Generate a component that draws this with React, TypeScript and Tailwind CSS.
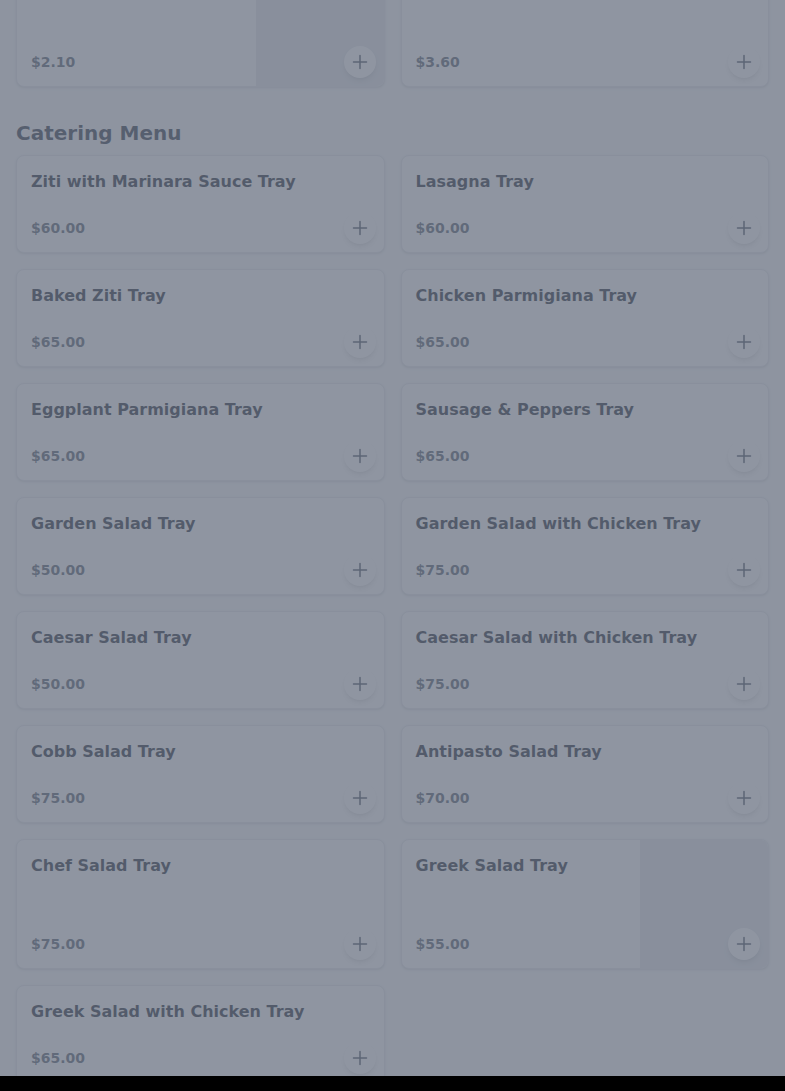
import { useState } from "react";

type Item = { name: string; price: string; image?: boolean };

const topRow: Item[] = [
  { name: "Garlic Knots", price: "$2.10", image: true },
  { name: "Side of Meatballs", price: "$3.60" },
];

const catering: Item[] = [
  { name: "Ziti with Marinara Sauce Tray", price: "$60.00" },
  { name: "Lasagna Tray", price: "$60.00" },
  { name: "Baked Ziti Tray", price: "$65.00" },
  { name: "Chicken Parmigiana Tray", price: "$65.00" },
  { name: "Eggplant Parmigiana Tray", price: "$65.00" },
  { name: "Sausage & Peppers Tray", price: "$65.00" },
  { name: "Garden Salad Tray", price: "$50.00" },
  { name: "Garden Salad with Chicken Tray", price: "$75.00" },
  { name: "Caesar Salad Tray", price: "$50.00" },
  { name: "Caesar Salad with Chicken Tray", price: "$75.00" },
  { name: "Cobb Salad Tray", price: "$75.00" },
  { name: "Antipasto Salad Tray", price: "$70.00" },
  { name: "Chef Salad Tray", price: "$75.00" },
  { name: "Greek Salad Tray", price: "$55.00", image: true },
  { name: "Greek Salad with Chicken Tray", price: "$65.00" },
];

const PlusIcon = () => (
  <svg width="16" height="16" viewBox="0 0 16 16" fill="none" stroke="currentColor" strokeWidth="1.5" strokeLinecap="round">
    <path d="M8 1.5v13M1.5 8h13" />
  </svg>
);

const MenuCard = ({ item, onAdd }: { item: Item; onAdd: () => void }) => (
  <div className="relative flex overflow-hidden rounded-lg border border-gray-200 bg-white shadow-sm">
    <div className="flex flex-1 flex-col justify-between pt-[14px] pb-[14px] pl-[14px] pr-3">
      <h3 className="text-base leading-6 font-bold text-gray-900">{item.name}</h3>
      <p className="mt-[24px] text-sm leading-5 font-bold text-gray-600">{item.price}</p>
    </div>
    {item.image && <div className="min-h-[128px] w-32 shrink-0 bg-gray-200" />}
    {/* Add to cart */}
    <button
      onClick={onAdd}
      className="absolute right-2 bottom-2 flex h-8 w-8 items-center justify-center rounded-full bg-white text-gray-700 shadow-md"
    >
      <PlusIcon />
    </button>
  </div>
);

export default function App() {
  const [cart, setCart] = useState<string[]>([]);
  const add = (name: string) => setCart([...cart, name]);

  return (
    <div className="flex h-[1091px] flex-col" style={{ fontFamily: '"DejaVu Sans", sans-serif' }}>
      <div className="relative flex-1 overflow-hidden bg-gray-50">
        <div className="-mt-[43px] px-4">
          <div className="grid grid-cols-2 gap-4">
            {topRow.map((item) => (
              <MenuCard key={item.name} item={item} onAdd={() => add(item.name)} />
            ))}
          </div>

          <section className="mt-8">
            <h2 className="mb-2 text-xl leading-7 font-bold text-gray-800">Catering Menu</h2>
            <div className="grid grid-cols-2 gap-4">
              {catering.map((item) => (
                <MenuCard key={item.name} item={item} onAdd={() => add(item.name)} />
              ))}
            </div>
          </section>
        </div>

        {/* Modal backdrop */}
        <div className="absolute inset-0 bg-gray-500/75" />
      </div>
      <div className="h-[15px] shrink-0 bg-black" />
    </div>
  );
}
